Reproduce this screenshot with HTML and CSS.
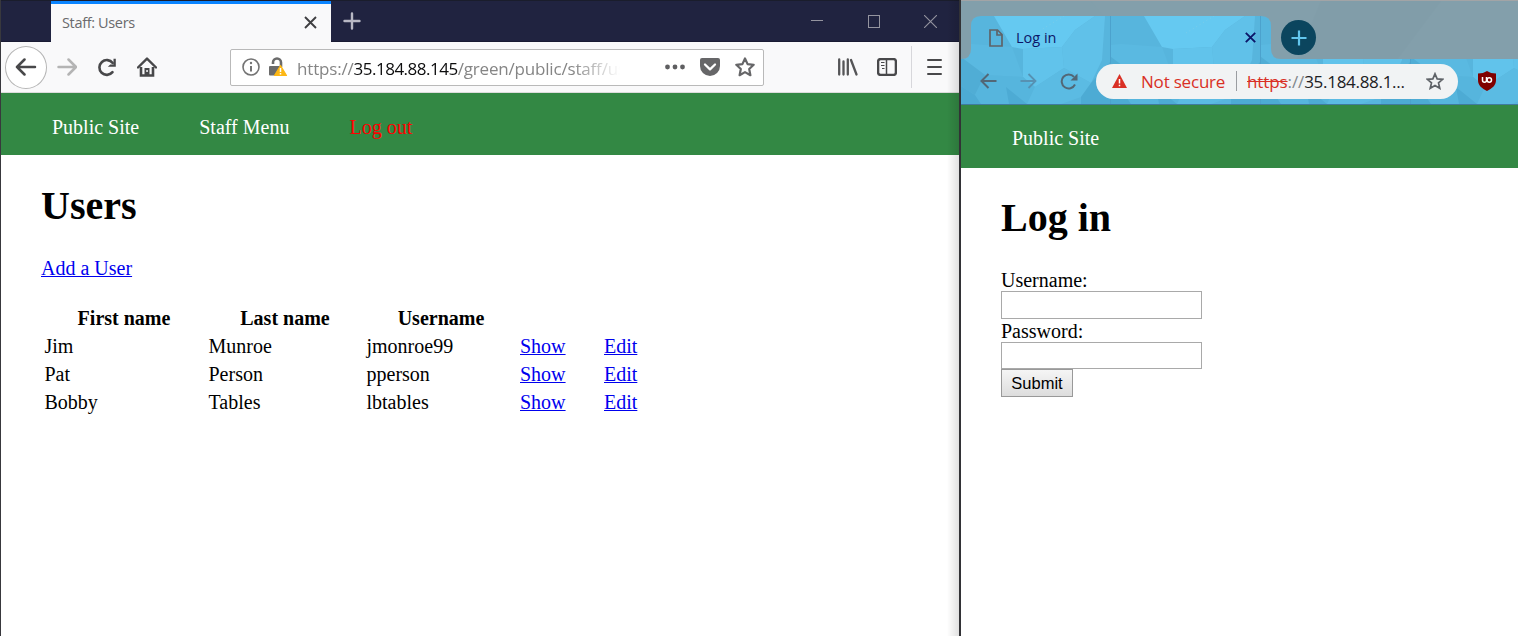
FILE: index.html
```html
<!DOCTYPE html>
<html lang="en">
<head>
<meta charset="utf-8">
<title>Staff: Users</title>
<link rel="stylesheet" href="styles.css">
</head>
<body>
<div class="desktop">
  <section class="window firefox">
    <header class="ff-titlebar">
      <div class="ff-tab">
        <span class="ff-tab-title">Staff: Users</span>
        <svg width="13" height="13" viewBox="0 0 13 13" fill="none" stroke="#3f3f41" stroke-width="1.9"><path d="M1 1l11 11M12 1L1 12"/></svg>
      </div>
      <svg class="ff-new" width="18" height="18" viewBox="0 0 18 18" stroke="#b8b8c4" stroke-width="2.4" stroke-linecap="round"><path d="M9 1.500v15M1.500 9h15"/></svg>
      <div class="ff-controls">
        <svg width="12" height="13" viewBox="0 0 12 13" stroke="#94949f"><path d="M0 5.500h12"/></svg>
        <svg width="12" height="13" viewBox="0 0 12 13" fill="none" stroke="#94949f"><rect x=".5" y=".5" width="11" height="12"/></svg>
        <svg width="13" height="13" viewBox="0 0 13 13" stroke="#94949f" stroke-width="1.1"><path d="M0 0l13 13M13 0L0 13"/></svg>
      </div>
    </header>
    <div class="ff-toolbar">
      <div class="ff-back"><svg width="22" height="18" viewBox="0 0 22 18" fill="none" stroke="#48484a" stroke-width="2.500" stroke-linecap="round" stroke-linejoin="round"><path d="M20 9H2M9.500 1.500L2 9l7.500 7.500"/></svg></div>
      <svg class="ff-forward" width="20" height="18" viewBox="0 0 20 18" fill="none" stroke="#b4b4b4" stroke-width="2.500" stroke-linecap="round" stroke-linejoin="round"><path d="M1.500 9H18.500M11.500 1.500L19 9l-7.500 7.500"/></svg>
      <svg class="ff-reload" width="20" height="19" viewBox="0 0 20 19" fill="none"><path d="M15.500 14.200A7.400 7.400 0 1 1 15.700 5" stroke="#48484a" stroke-width="2.600" stroke-linecap="round"/><path d="M18.800 .8v8h-8l2.500-2.300h3.200V.8z" fill="#48484a"/></svg>
      <svg class="ff-home" width="20" height="20" viewBox="0 0 20 20" fill="none"><path d="M1 10.500L10 1.600l9 8.900" stroke="#48484a" stroke-width="2.400" stroke-linecap="round" stroke-linejoin="round"/><path d="M4 10v8.500h12V10" stroke="#48484a" stroke-width="2.600"/><path d="M7.500 19v-8h5v8z" fill="#48484a"/><path d="M9.300 13h1.500v2H9.300z" fill="#f9f9fa"/></svg>
      <div class="ff-url">
        <svg width="18" height="18" viewBox="0 0 18 18" fill="none"><circle cx="9" cy="9" r="8" stroke="#737373" stroke-width="1.600"/><path d="M9 8v5.500" stroke="#737373" stroke-width="2"/><circle cx="9" cy="5" r="1.200" fill="#737373"/></svg>
        <svg class="ff-lock" width="20" height="20" viewBox="0 0 20 20" fill="none"><path d="M5 7V5.500a4 4 0 0 1 8 0V10" stroke="#6b6b6b" stroke-width="2.600"/><path d="M2 9h10v9.500H2a1 1 0 0 1-1-1V10a1 1 0 0 1 1-1z" fill="#6b6b6b"/><path d="M12.500 8.500L18.500 18.500h-12z" fill="#fdb714" stroke="#fdb714" stroke-width="1.200" stroke-linejoin="round"/><path d="M12.500 11v4M12.500 16v1.500" stroke="#fff" stroke-width="1.500"/></svg>
        <span class="ff-address">https://<b>35.184.88.145</b>/green/public/staff/us</span>
        <svg class="ff-dots" width="20" height="6" viewBox="0 0 20 6" fill="#5f5f61"><circle cx="2.500" cy="3" r="2.400"/><circle cx="10" cy="3" r="2.400"/><circle cx="17.500" cy="3" r="2.400"/></svg>
        <svg class="ff-pocket" width="20" height="18" viewBox="0 0 20 18"><path d="M2 0h16a2 2 0 0 1 2 2v6a10 10 0 0 1-20 0V2a2 2 0 0 1 2-2z" fill="#666668"/><path d="M5 6.500l5 4.800 5-4.800" fill="none" stroke="#fff" stroke-width="2.300" stroke-linecap="round" stroke-linejoin="round"/></svg>
        <svg class="ff-star" width="20" height="20" viewBox="0 0 20 20"><path d="M10 1.500l2.600 5.600 6.100.7-4.500 4.200 1.200 6.200-5.400-3.100-5.400 3.100 1.200-6.200L1.300 7.800l6.100-.7z" fill="none" stroke="#666668" stroke-width="2.200" stroke-linejoin="round"/></svg>
      </div>
      <div class="ff-tools">
        <svg width="20" height="18" viewBox="0 0 20 18" stroke="#555557" stroke-width="2.300" stroke-linecap="round"><path d="M1.200 1.500v15M5.500 3.500v13M9.800 1.500v15M13 2l5.500 14.500"/></svg>
        <svg width="20" height="18" viewBox="0 0 20 18" fill="none" stroke="#48484a"><rect x="1.100" y="1.100" width="17.800" height="15.800" rx="2.500" stroke-width="2.400"/><path d="M9.500 1v16" stroke-width="1.500"/><path d="M4 4.500h3.500M4 7.500h3.500M5 10.500h2.500" stroke-width="1.200"/></svg>
      </div>
      <div class="ff-menu"><i></i><i></i><i></i></div>
    </div>
    <nav class="site-nav"><a>Public Site</a><a>Staff Menu</a><a class="logout">Log out</a></nav>
    <main class="page users">
      <h1>Users</h1>
      <p><a class="link">Add a User</a></p>
      <table>
        <colgroup><col class="c1"><col class="c2"><col class="c3"><col class="c4"><col class="c5"></colgroup>
        <tr><th>First name</th><th>Last name</th><th>Username</th><th></th><th></th></tr>
        <tr><td>Jim</td><td>Munroe</td><td>jmonroe99</td><td><a class="link">Show</a></td><td><a class="link">Edit</a></td></tr>
        <tr><td>Pat</td><td>Person</td><td>pperson</td><td><a class="link">Show</a></td><td><a class="link">Edit</a></td></tr>
        <tr><td>Bobby</td><td>Tables</td><td>lbtables</td><td><a class="link">Show</a></td><td><a class="link">Edit</a></td></tr>
      </table>
    </main>
    <div class="edge-shadow"></div>
  </section>
  <section class="window chrome">
    <header class="cr-head">
      <svg class="cr-theme" width="557" height="104" viewBox="0 0 557 104">
        <defs>
          <pattern id="facets" width="150" height="104" patternUnits="userSpaceOnUse">
            <rect width="150" height="104" fill="#57b5dd"/>
            <path d="M33 16l18 31 11 2 39-2 13-17 20-14z" fill="#65c9f1"/>
            <path d="M114 30l20-14h10l-3 44-11 23-27-15-2-21z" fill="#60c1e9"/>
            <path d="M62 49l39-2 2 21-29 19-12-10z" fill="#61c3eb"/>
            <path d="M0 45l10-1 41 3 11 30-38-2-24-18z" fill="#5ab9e1"/>
            <path d="M0 57l24 18-10 20-14-9z" fill="#50add5"/>
            <path d="M24 75l38 2 12 10-8 17H20l-6-9z" fill="#56b5dd"/>
            <path d="M74 87l29-19 27 15-10 14-20 7H66z" fill="#5bbbe3"/>
            <path d="M130 83l20-22v43h-30V97zM14 95l6 9H0V86zM45 87l21 17H48z" fill="#4dabd4"/>
            <path d="M75 33l28-17" stroke="#79cdea" stroke-dasharray="1 3"/>
            <path d="M149.500 0v104" stroke="#4ca2cd" stroke-width="1"/>
          </pattern>
        </defs>
        <path d="M0 1H130L180 60H0z" fill="#829fab"/><path d="M360 1h120l-45 60h-100z" fill="#819da9"/>
        <path d="M0 104V59Q10 59 10 49V26Q10 16 20 16H300Q310 16 310 26V49Q310 59 320 59H557V104Z" fill="url(#facets)"/>
      </svg>
      <div class="cr-tabs">
        <svg width="14" height="18" viewBox="0 0 14 18" fill="none" stroke="#5f6368" stroke-width="1.700"><path d="M1 1h7.500L13 5.500V17H1zM8 1v5h5"/></svg>
        <span class="cr-tab-title">Log in</span>
        <svg class="cr-close" width="11" height="11" viewBox="0 0 11 11" stroke="#0c1668" stroke-width="1.900"><path d="M.8.8l9.400 9.400M10.200.8L.8 10.200"/></svg>
        <div class="cr-new"><svg width="16" height="16" viewBox="0 0 16 16" stroke="#62c6ee" stroke-width="2.200"><path d="M8 .5v15M.5 8h15"/></svg></div>
      </div>
      <div class="cr-toolbar">
        <svg width="17" height="16" viewBox="0 0 17 16" fill="none" stroke="#526776" stroke-width="2"><path d="M16.500 8H2M8.500 1L1.500 8l7 7"/></svg>
        <svg width="17" height="16" viewBox="0 0 17 16" fill="none" stroke="#5791b2" stroke-width="1.800"><path d="M.5 8H15M8.500 1l7 7-7 7"/></svg>
        <svg class="cr-reload" width="18" height="17" viewBox="0 0 18 17" fill="none"><path d="M15 11.500A7 7 0 1 1 14 3.800" stroke="#526776" stroke-width="2"/><path d="M17.500 .5v7h-7z" fill="#526776"/></svg>
        <div class="cr-url">
          <svg width="15" height="14" viewBox="0 0 15 14"><path d="M7.500 0L15 14H0z" fill="#d93025"/><path d="M7.500 5v4.500M7.500 10.700v1.500" stroke="#fff" stroke-width="1.500"/></svg>
          <span class="cr-insecure">Not secure</span>
          <span class="cr-sep"></span>
          <span class="cr-address"><s>https</s><i>://</i><b>35.184.88.1...</b></span>
          <svg class="cr-star" width="18" height="18" viewBox="0 0 20 20"><path d="M10 2l2.400 5.600 6.100.5-4.600 4 1.400 6-5.300-3.200-5.300 3.200 1.400-6-4.600-4 6.100-.5z" fill="none" stroke="#5f6368" stroke-width="1.900"/></svg>
        </div>
        <svg class="cr-shield" width="18" height="20" viewBox="0 0 18 20"><path d="M9 0c2.500 1.700 5.500 2.500 9 2.500V9c0 5.500-4 8.500-9 11-5-2.500-9-5.500-9-11V2.500C3.500 2.500 6.500 1.700 9 0z" fill="#800000"/><path d="M4.500 6v3.200a2 2 0 0 0 4 0V6" fill="none" stroke="#fff" stroke-width="1.500"/><circle cx="11.300" cy="9" r="2.200" fill="none" stroke="#fff" stroke-width="1.500"/></svg>
      </div>
    </header>
    <nav class="site-nav"><a>Public Site</a></nav>
    <main class="page login">
      <h1>Log in</h1>
      <form>
        <label>Username:</label><input type="text">
        <label>Password:</label><input class="pw" type="password">
        <button type="button">Submit</button>
      </form>
    </main>
  </section>
</div>
</body>
</html>
```

FILE: styles.css
```css
* { box-sizing: border-box; }
body { margin: 0; background: #fff; }
svg { display: block; flex: none; }
.desktop { display: grid; grid-template-columns: 961px 557px; width: 1518px; height: 636px; overflow: hidden; font: 20px/23px "Liberation Serif", serif; color: #000; }
.window { background: #fff; position: relative; min-width: 0; }
.firefox { border-left: 1px solid #38383d; border-right: 2px solid #323236; }

.ff-titlebar { display: flex; height: 42px; background: #202340; border-top: 1px solid #1a1d2c; border-bottom: 1px solid #191b33; padding-left: 50px; }
.ff-tab { display: flex; align-items: center; justify-content: space-between; width: 280px; height: 41px; padding: 0 14px 1px 11px; background: #f9f9fa; border-top: 3px solid #0a84ff; }
.ff-tab-title { font: 14.500px/20px "Open Sans", sans-serif; letter-spacing: -.35px; color: #6a6a6c; }
.ff-new { margin: 11px 0 0 12px; }
.ff-controls { display: flex; gap: 45px; margin: 14px 22px 0 auto; }
.ff-controls svg:last-child { margin-left: -1px; }

.ff-toolbar { display: flex; align-items: center; height: 51px; background: #f9f9fa; border-bottom: 1px solid #dcdcdc; padding-left: 4px; }
.ff-back { display: grid; place-items: center; width: 42px; height: 43px; border: 1px solid #b5b5b5; border-radius: 50%; background: #fff; }
.ff-forward { margin-left: 10px; }
.ff-reload { margin-left: 20px; }
.ff-home { margin-left: 20px; }
.ff-url { display: flex; align-items: center; width: 534px; height: 37px; margin-left: 73px; padding-left: 11px; background: #fff; border: 1px solid #b9b9b9; border-radius: 2px; }
.ff-lock { margin-left: 8px; }
.ff-address { flex: none; width: 329px; margin-left: 9px; white-space: nowrap; font: 17px/26px "Open Sans", sans-serif; letter-spacing: -.18px; color: #858585; padding-top: 3px; -webkit-mask-image: linear-gradient(90deg, #000 275px, transparent 323px); mask-image: linear-gradient(90deg, #000 275px, transparent 323px); }
.ff-address b { font-weight: 400; letter-spacing: -.5px; color: #0c0c0d; }
.ff-dots { margin-left: 39px; }
.ff-pocket { margin-left: 15px; }
.ff-star { margin-left: 15px; }
.ff-tools { display: flex; gap: 19px; margin-left: 74px; }
.ff-menu { display: grid; align-content: center; gap: 5px; height: 42px; margin-left: 14px; padding-left: 15px; border-left: 1px solid #d7d7db; }
.ff-menu i { width: 15px; height: 2px; background: #48484a; border-radius: 1px; }
.edge-shadow { position: absolute; top: 0; right: 0; width: 12px; height: 636px; background: linear-gradient(90deg, transparent, rgba(0,0,0,.12)); }

.site-nav { display: flex; gap: 60px; height: 62px; padding: 23px 51px 0; background: #338844; color: #fff; }
.logout { color: #f00; }
.page { padding: 0 40px; }
h1 { margin: 0; font-size: 40px; line-height: 46px; }
.users h1 { padding-top: 28px; }
.users p { margin: 28px 0 0; }
.link { color: #00e; text-decoration: underline; text-decoration-thickness: 1px; }
table { width: 600px; margin-top: 23px; table-layout: fixed; border-spacing: 2px; }
th, td { height: 26px; padding: 2px 1px 0; line-height: 23px; text-align: left; vertical-align: top; }
td:nth-child(-n+3) { padding-left: 1.500px; }
th { text-align: center; }
.c1 { width: 162px; }
.c2 { width: 156px; }
.c3 { width: 152px; }
.c4 { width: 82px; }
.c5 { width: 36px; }

.chrome .site-nav { height: 63px; padding-top: 22px; }
.cr-head { position: relative; height: 105px; background: #839fab; border-bottom: 1px solid #407b9d; box-shadow: inset 0 1px #a2a4a6; }
.cr-theme { position: absolute; left: 0; top: 0; }
.cr-tabs { position: relative; display: flex; align-items: center; height: 59px; padding: 16px 0 0 28px; }
.cr-tab-title { width: 60px; margin-left: 13px; font: 14.500px/20px "Open Sans", sans-serif; letter-spacing: 0; color: #0c1668; }
.cr-close { margin-left: 169px; }
.cr-new { display: grid; place-items: center; width: 35px; height: 35px; margin-left: 25px; border-radius: 50%; background: #0b455e; }
.cr-toolbar { position: relative; display: flex; align-items: center; height: 44px; padding-left: 19px; }
.cr-toolbar > svg + svg { margin-left: 23px; }
.cr-url { display: flex; align-items: center; width: 362px; height: 35px; margin-left: 18px; padding-left: 16px; border-radius: 18px; background: #f1f3f4; font: 17px/26px "Open Sans", sans-serif; white-space: nowrap; }
.cr-insecure { width: 84px; margin-left: 14px; padding-top: 2px; color: #d93025; letter-spacing: -.2px; }
.cr-sep { width: 1px; height: 20px; margin-left: 11px; background: #9a9da1; }
.cr-address { width: 158px; margin-left: 10px; padding-top: 2px; letter-spacing: -.1px; color: #202124; }
.cr-address s { color: #d93025; }
.cr-address i { font-style: normal; color: #80868b; }
.cr-address b { font-weight: 400; letter-spacing: -.3px; }
.cr-star { margin-left: 21px; }
.cr-shield { margin-left: 20px; }
.login h1 { padding-top: 27px; }
.login form { display: flex; flex-direction: column; align-items: flex-start; margin-top: 27px; }
.login label { height: 23px; line-height: 25px; }
.login input { width: 201px; height: 28px; margin: 0; padding: 0; border: 1px solid #a9a9a9; background: #fff; }
.login input.pw { height: 27px; }
.login button { width: 72px; height: 28px; padding: 0; border: 1px solid #999; background: linear-gradient(#f5f5f5, #dddddd); font: 16.500px/20px "Liberation Sans", sans-serif; color: #000; }
```
